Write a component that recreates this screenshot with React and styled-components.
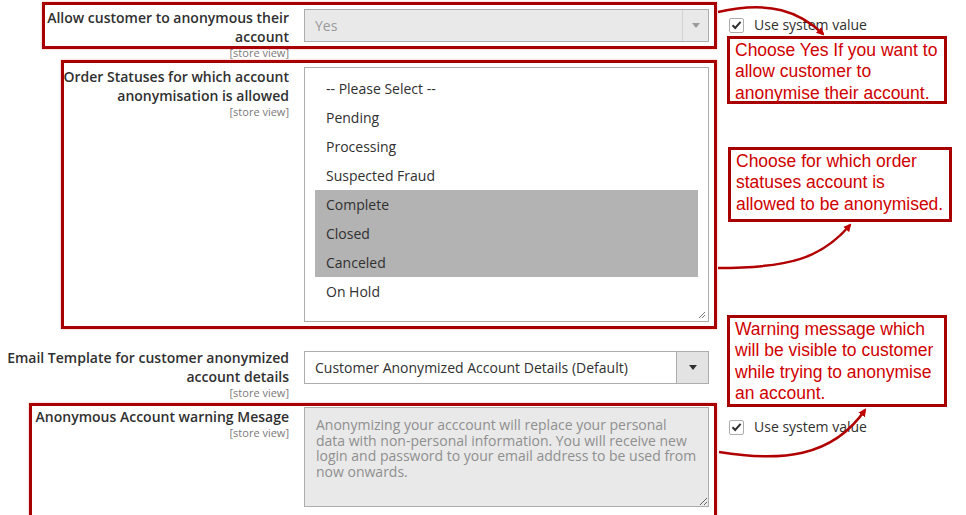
import React from 'react';
import styled, { createGlobalStyle } from 'styled-components';

const GlobalStyle = createGlobalStyle`
	html, body {
		margin: 0;
		padding: 0;
		background: #fff;
	}
	body {
		font-family: 'Open Sans', 'Liberation Sans', sans-serif;
		color: #303030;
	}
`;

const statuses = [
	{ name: '-- Please Select --' },
	{ name: 'Pending' },
	{ name: 'Processing' },
	{ name: 'Suspected Fraud' },
	{ name: 'Complete', selected: true },
	{ name: 'Closed', selected: true },
	{ name: 'Canceled', selected: true },
	{ name: 'On Hold' },
];

const warning = [
	'Anonymizing your acccount will replace your personal',
	'data with non-personal information. You will receive new',
	'login and password to your email address to be used from',
	'now onwards.',
].join('\n');

function Select({ value, disabled }) {
	return (
		<SelectBox $disabled={disabled}>
			<SelectValue>{value}</SelectValue>
			<SelectButton $disabled={disabled}>
				<Caret $disabled={disabled} />
			</SelectButton>
		</SelectBox>
	);
}

function UseSystem({ top }) {
	return (
		<CheckLabel $top={top}>
			<CheckBox>
				<svg width="11" height="10" viewBox="0 0 11 10">
					<path d="M1.5 5.2 L4.2 8 L9.6 1.8" fill="none" stroke="#303030" strokeWidth="2" />
				</svg>
			</CheckBox>
			Use system value
		</CheckLabel>
	);
}

function Grip() {
	return (
		<GripIcon width="9" height="9" viewBox="0 0 9 9">
			<path d="M8 2 L2 8 M8 5 L5 8" stroke="#777" strokeWidth="1" />
		</GripIcon>
	);
}

export default function App() {
	return (
		<>
			<GlobalStyle />
			<Page>
				<Row>
					<Label>
						Allow customer to anonymous their account
						<Scope>[store view]</Scope>
					</Label>
					<Control $top={1}>
						<Select value="Yes" disabled />
					</Control>
					<UseSystem top={9} />
				</Row>

				<Row $mt={8}>
					<Label>
						Order Statuses for which account anonymisation is allowed
						<Scope>[store view]</Scope>
					</Label>
					<Control>
						<MultiSelect>
							{statuses.map((s) => (
								<Option key={s.name} $selected={s.selected}>
									{s.name}
								</Option>
							))}
							<Grip />
						</MultiSelect>
					</Control>
				</Row>

				<Row $mt={26}>
					<Label>
						Email Template for customer anonymized account details
						<Scope>[store view]</Scope>
					</Label>
					<Control $top={3}>
						<Select value="Customer Anonymized Account Details (Default)" />
					</Control>
				</Row>

				<Row $mt={8}>
					<Label>
						Anonymous Account warning Mesage
						<Scope>[store view]</Scope>
					</Label>
					<Control>
						<TextArea readOnly disabled value={warning} />
					</Control>
					<UseSystem top={12} />
				</Row>

				<Highlight $left={42} $top={2} $width={675} $height={47} />
				<Highlight $left={61} $top={60} $width={656} $height={269} />
				<Highlight $left={29} $top={403} $width={688} $height={115} />

				<Note $left={727} $top={36} $width={220} $height={68}>
					Choose Yes If you want to
					<br />
					allow customer to
					<br />
					anonymise their account.
				</Note>
				<Note $left={728} $top={147} $width={224} $height={75}>
					Choose for which order
					<br />
					statuses account is
					<br />
					allowed to be anonymised.
				</Note>
				<Note $left={727} $top={315} $width={220} $height={92}>
					Warning message which
					<br />
					will be visible to customer
					<br />
					while trying to anonymise
					<br />
					an account.
				</Note>

				<Arrows width="966" height="515" viewBox="0 0 966 515">
					<defs>
						<marker id="head" markerWidth="8" markerHeight="8" refX="6" refY="4" orient="auto" markerUnits="userSpaceOnUse">
							<path d="M0 0 L8 4 L0 8 Z" fill="#c00000" />
						</marker>
					</defs>
					<path d="M718 12 C 770 0, 800 12, 823 34" stroke="#b00000" strokeWidth="2.5" fill="none" markerEnd="url(#head)" />
					<path d="M718 268 C 790 268, 822 258, 850 225" stroke="#b00000" strokeWidth="2.5" fill="none" markerEnd="url(#head)" />
					<path d="M719 452 C 780 462, 832 458, 865 410" stroke="#b00000" strokeWidth="2.5" fill="none" markerEnd="url(#head)" />
				</Arrows>
			</Page>
		</>
	);
}

const Page = styled.div`
	position: relative;
	width: 966px;
	height: 515px;
	overflow: hidden;
	padding-top: 8px;
	box-sizing: border-box;
`;

const Row = styled.div`
	display: grid;
	grid-template-columns: 289px 405px 1fr;
	column-gap: 15px;
	align-items: start;
	margin-top: ${(p) => p.$mt || 0}px;
`;

const Label = styled.div`
	text-align: right;
	font-size: 14px;
	font-weight: 600;
	line-height: 19px;
	color: #303030;
`;

const Scope = styled.div`
	font-size: 11px;
	font-weight: 400;
	line-height: 13px;
	color: #7a7a7a;
`;

const Control = styled.div`
	margin-top: ${(p) => p.$top || 0}px;
`;

const SelectBox = styled.div`
	display: flex;
	height: 33px;
	box-sizing: border-box;
	border: 1px solid #adadad;
	background: ${(p) => (p.$disabled ? '#e9e9e9' : '#fff')};
	color: ${(p) => (p.$disabled ? '#999' : '#303030')};
	font-size: 14px;
`;

const SelectValue = styled.div`
	flex: 1;
	display: flex;
	align-items: center;
	padding-left: 10px;
`;

const SelectButton = styled.div`
	width: ${(p) => (p.$disabled ? 25 : 31)}px;
	display: flex;
	align-items: center;
	justify-content: center;
	border-left: 1px solid ${(p) => (p.$disabled ? '#d2d2d2' : '#adadad')};
	background: ${(p) => (p.$disabled ? '#e9e9e9' : '#e3e3e3')};
`;

const Caret = styled.span`
	width: 0;
	height: 0;
	border-left: ${(p) => (p.$disabled ? 4 : 4.5)}px solid transparent;
	border-right: ${(p) => (p.$disabled ? 4 : 4.5)}px solid transparent;
	border-top: 5px solid ${(p) => (p.$disabled ? '#9a9a9a' : '#303030')};
`;

const MultiSelect = styled.div`
	position: relative;
	height: 255px;
	box-sizing: border-box;
	border: 1px solid #adadad;
	padding: 6px 10px;
	background: #fff;
`;

const Option = styled.div`
	height: 29px;
	line-height: 29px;
	padding-left: 11px;
	font-size: 14px;
	color: #303030;
	background: ${(p) => (p.$selected ? '#b3b3b3' : 'transparent')};
`;

const GripIcon = styled.svg`
	position: absolute;
	right: 2px;
	bottom: 2px;
`;

const TextArea = styled.textarea`
	display: block;
	width: 405px;
	height: 100px;
	box-sizing: border-box;
	margin: 0;
	border: 1px solid #adadad;
	background: #e9e9e9;
	color: #8f8f8f;
	font-family: 'Open Sans', 'Liberation Sans', sans-serif;
	font-size: 14px;
	line-height: 15.7px;
	padding: 9px 4px 3px 11px;
	resize: vertical;
	overflow: hidden;
	white-space: pre;
	opacity: 1;
	-webkit-text-fill-color: #8f8f8f;
`;

const CheckLabel = styled.label`
	display: flex;
	align-items: center;
	gap: 10px;
	margin-top: ${(p) => p.$top || 0}px;
	padding-left: 5px;
	font-size: 14px;
	line-height: 16px;
	color: #303030;
`;

const CheckBox = styled.span`
	width: 15px;
	height: 15px;
	box-sizing: border-box;
	border: 1px solid #adadad;
	border-radius: 2px;
	background: #fff;
	display: flex;
	align-items: center;
	justify-content: center;
`;

const Highlight = styled.div`
	position: absolute;
	left: ${(p) => p.$left}px;
	top: ${(p) => p.$top}px;
	width: ${(p) => p.$width}px;
	height: ${(p) => p.$height}px;
	box-sizing: border-box;
	border: 3px solid #a80000;
	box-shadow: 0 0 2px rgba(200, 0, 0, 0.35);
	pointer-events: none;
`;

const Note = styled.div`
	position: absolute;
	left: ${(p) => p.$left}px;
	top: ${(p) => p.$top}px;
	width: ${(p) => p.$width}px;
	height: ${(p) => p.$height}px;
	box-sizing: border-box;
	border: 3px solid #a80000;
	background: #fff;
	padding: 1px 0 0 5px;
	font-family: 'Liberation Sans', Arial, sans-serif;
	font-size: 17.5px;
	line-height: 21.3px;
	color: #d00000;
	white-space: nowrap;
`;

const Arrows = styled.svg`
	position: absolute;
	left: 0;
	top: 0;
	pointer-events: none;
`;
